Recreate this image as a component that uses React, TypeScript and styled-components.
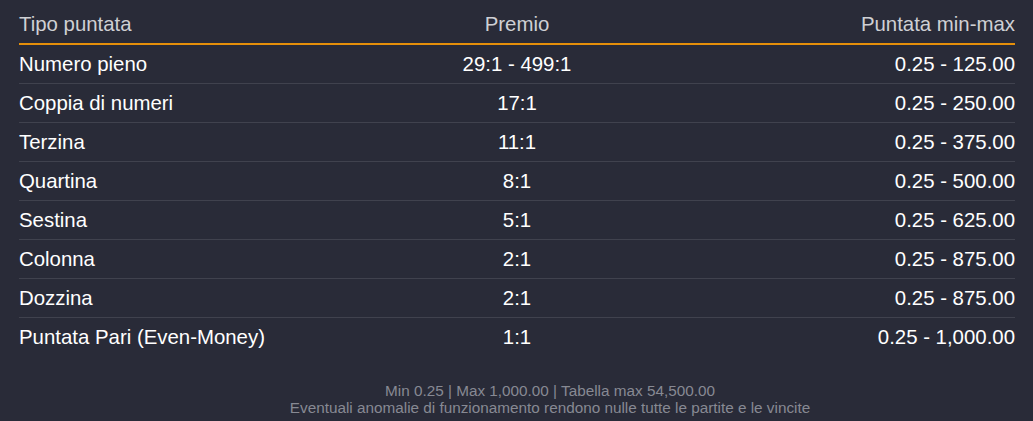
import React from "react";
import styled, { createGlobalStyle } from "styled-components";

const Global = createGlobalStyle`
  html, body { margin: 0; padding: 0; background: #292b38; }
  body { font-family: "Liberation Sans", Arial, sans-serif; }
`;

const Page = styled.div`
  width: 1033px;
  height: 421px;
  background: #292b38;
  box-sizing: border-box;
  padding: 0 18px 0 19px;
  display: flex;
  flex-direction: column;
`;

const Table = styled.div`
  display: flex;
  flex-direction: column;
`;

const Row = styled.div<{ $head?: boolean; $last?: boolean }>`
  display: grid;
  grid-template-columns: 1fr 1fr 1fr;
  align-items: center;
  box-sizing: content-box;
  height: ${(p) => (p.$head ? "37px" : "38px")};
  padding-top: ${(p) => (p.$head ? "6px" : "0")};
  border-bottom: ${(p) =>
    p.$head ? "2px solid #e58f0a" : p.$last ? "none" : "1px solid #40424e"};
  font-size: 20.4px;
  color: ${(p) => (p.$head ? "#cfd0d4" : "#ffffff")};
`;

const Cell = styled.div<{ $align: "left" | "center" | "right" }>`
  text-align: ${(p) => p.$align};
  white-space: nowrap;
`;

const Footer = styled.div`
  margin-top: 26px;
  padding-left: 66px;
  text-align: center;
  font-size: 15.3px;
  line-height: 17px;
  color: #878993;
`;

const rows: [string, string, string][] = [
  ["Numero pieno", "29:1 - 499:1", "0.25 - 125.00"],
  ["Coppia di numeri", "17:1", "0.25 - 250.00"],
  ["Terzina", "11:1", "0.25 - 375.00"],
  ["Quartina", "8:1", "0.25 - 500.00"],
  ["Sestina", "5:1", "0.25 - 625.00"],
  ["Colonna", "2:1", "0.25 - 875.00"],
  ["Dozzina", "2:1", "0.25 - 875.00"],
  ["Puntata Pari (Even-Money)", "1:1", "0.25 - 1,000.00"],
];

export default function App() {
  return (
    <>
      <Global />
      <Page>
        <Table>
          <Row $head>
            <Cell $align="left">Tipo puntata</Cell>
            <Cell $align="center">Premio</Cell>
            <Cell $align="right">Puntata min-max</Cell>
          </Row>
          {rows.map((r, i) => (
            <Row key={i} $last={i === rows.length - 1}>
              <Cell $align="left">{r[0]}</Cell>
              <Cell $align="center">{r[1]}</Cell>
              <Cell $align="right">{r[2]}</Cell>
            </Row>
          ))}
        </Table>
        <Footer>
          Min 0.25 | Max 1,000.00 | Tabella max 54,500.00
          <br />
          Eventuali anomalie di funzionamento rendono nulle tutte le partite e le vincite
        </Footer>
      </Page>
    </>
  );
}
